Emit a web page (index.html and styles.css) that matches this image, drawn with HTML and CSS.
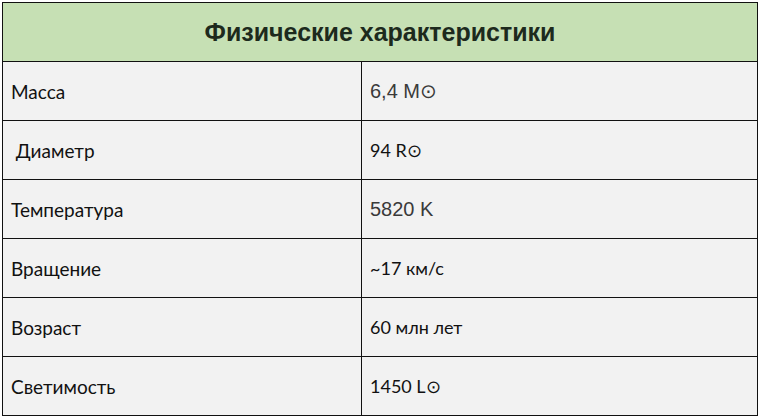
FILE: index.html
```html
<!DOCTYPE html>
<html lang="ru">
<head>
<meta charset="utf-8">
<link rel="stylesheet" href="styles.css">
</head>
<body>
<table class="props">
  <colgroup><col class="c1"><col class="c2"></colgroup>
  <tr><th colspan="2" class="title">Физические характеристики</th></tr>
  <tr><td class="k">Масса</td><td class="v alt">6,4 M⊙</td></tr>
  <tr><td class="k">&nbsp;Диаметр</td><td class="v">94 R⊙</td></tr>
  <tr><td class="k">Температура</td><td class="v alt">5820 K</td></tr>
  <tr><td class="k">Вращение</td><td class="v">~17 км/с</td></tr>
  <tr><td class="k">Возраст</td><td class="v">60 млн лет</td></tr>
  <tr><td class="k">Светимость</td><td class="v">1450 L⊙</td></tr>
</table>
</body>
</html>
```
FILE: styles.css
```css
html, body { margin: 0; padding: 0; background: #ffffff; }
body { padding: 2px 0 0 2px; }
.props {
  border-collapse: collapse;
  width: 755px;
  table-layout: fixed;
}
.c1 { width: 359px; }
.c2 { width: 396px; }
.props th, .props td {
  border: 1px solid #111;
  height: 59px;
  padding: 0 8px;
  box-sizing: border-box;
  vertical-align: middle;
}
.title {
  background: #c6e0b4;
  font-family: "Liberation Sans", Arial, sans-serif;
  font-weight: bold;
  font-size: 25px;
  color: #1d2a1d;
  text-align: center;
}
.k, .v {
  background: #f2f2f2;
  font-family: Lato, "Noto Sans", sans-serif;
  color: #111;
  text-align: left;
}
.k { font-size: 19px; }
.v { font-size: 18px; }
.v.alt {
  font-family: "Liberation Sans", Arial, sans-serif;
  font-size: 20px;
  color: #3a3a3a;
}
```
